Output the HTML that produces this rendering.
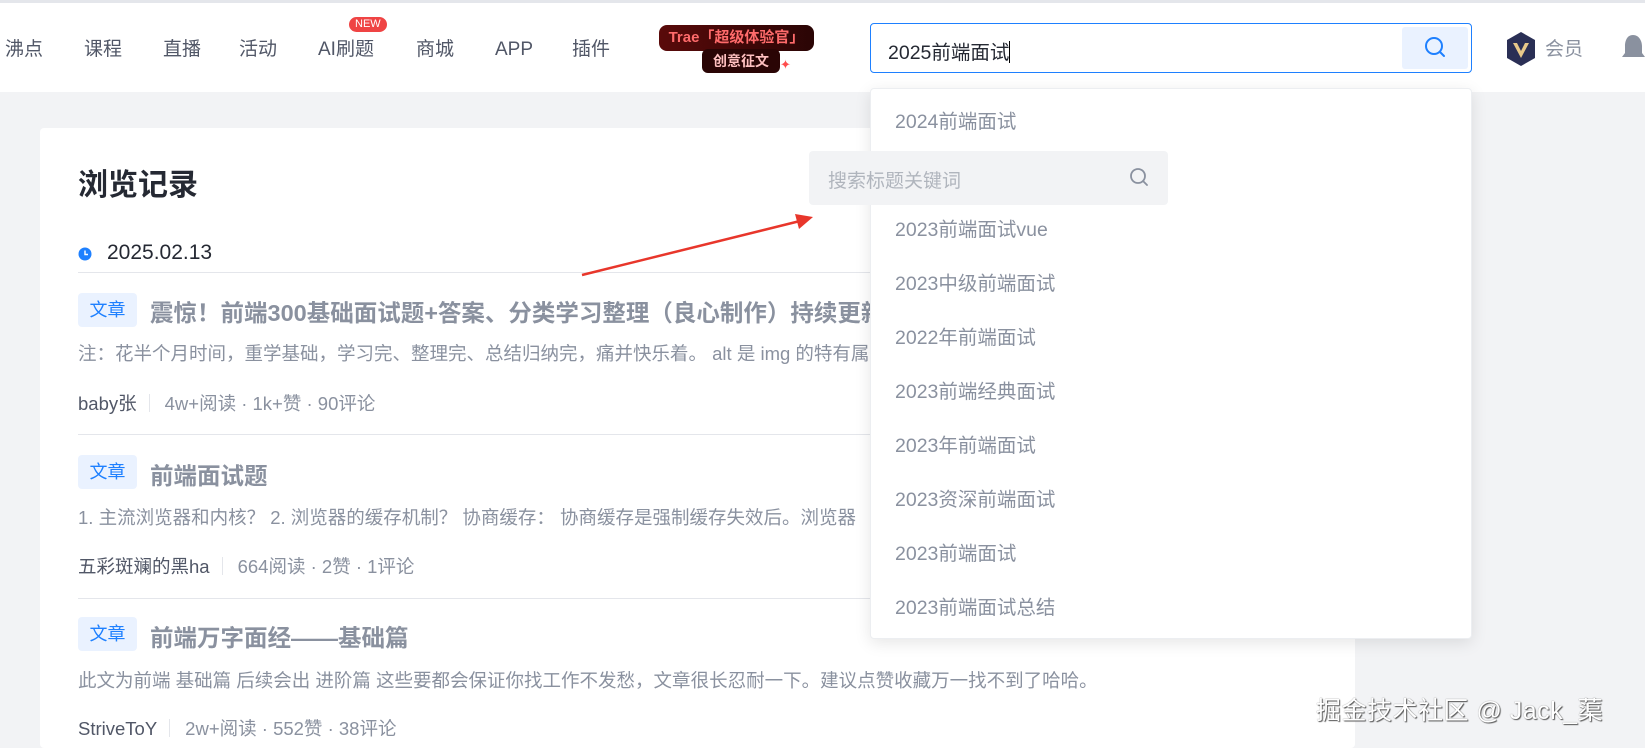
<!DOCTYPE html>
<html><head><meta charset="utf-8"><style>
*{margin:0;padding:0;box-sizing:border-box}
body{width:1645px;height:742px;overflow:hidden;background:#f2f3f5;font-family:"Liberation Sans","Noto Sans CJK SC",sans-serif;position:relative;color:#252933}
.abs{position:absolute;white-space:nowrap}
#hdr{position:absolute;left:0;top:0;width:1645px;height:92px;background:#fff;border-top:3px solid #e4e6eb}
.nav{position:absolute;top:34px;font-size:19px;color:#515767;line-height:26px}
.card{position:absolute;left:40px;top:128px;width:1315px;height:620px;background:#fff;border-radius:4px}
.tag{position:absolute;left:78px;width:59px;height:34px;background:#eaf2ff;color:#1e80ff;font-size:18px;line-height:34px;text-align:center;border-radius:4px}
.t{position:absolute;left:150px;font-size:23.5px;font-weight:bold;color:#8a919f;white-space:nowrap}
.ex{position:absolute;left:78px;font-size:18.5px;color:#8a919f;white-space:nowrap}
.meta{position:absolute;left:78px;font-size:18.5px;color:#8a919f;white-space:nowrap}
.meta b{font-weight:normal;color:#515767}
.meta i{font-style:normal;display:inline-block;width:1px;height:18px;background:#e4e6eb;margin:0 15px -2px 12px}
.hr{position:absolute;left:78px;width:1240px;height:1px;background:#e4e6eb}
.dd{position:absolute;left:870px;top:88px;width:602px;height:551px;background:#fff;border-radius:4px;box-shadow:0 4px 16px rgba(0,0,0,.1);border:1px solid #eceef1}
.di{position:absolute;left:24px;font-size:19.5px;color:#8a919f;line-height:24px}
</style></head><body>
<div id="hdr">
<div class="nav" style="left:5px">沸点</div>
<div class="nav" style="left:84px">课程</div>
<div class="nav" style="left:163px">直播</div>
<div class="nav" style="left:239px">活动</div>
<div class="nav" style="left:318px">AI刷题</div>
<div class="abs" style="left:349px;top:14px;background:#ef4444;color:#fff;font-size:11px;line-height:15px;padding:0 6px;border-radius:8px">NEW</div>
<div class="nav" style="left:416px">商城</div>
<div class="nav" style="left:495px">APP</div>
<div class="nav" style="left:572px">插件</div>
<div class="abs" style="left:659px;top:22px;width:155px;height:26px;background:linear-gradient(90deg,#5a0a0a,#2a0505);border-radius:8px;color:#ff6b6b;font-size:15px;font-weight:bold;line-height:26px;text-align:center">Trae「超级体验官」</div>
<div class="abs" style="left:702px;top:46px;width:78px;height:24px;background:#2a0505;border-radius:6px;color:#ffc0c0;font-size:14px;font-weight:bold;line-height:24px;text-align:center">创意征文</div>
<div class="abs" style="left:780px;top:54px;color:#ff4d4d;font-size:13px">✦</div>
<div class="abs" style="left:870px;top:20px;width:602px;height:50px;border:1px solid #1e80ff;border-radius:4px;background:#fff">
<div class="abs" style="left:17px;top:12px;font-size:19.5px;color:#252933">2025前端面试<span style="display:inline-block;width:1px;height:22px;background:#000;vertical-align:-4px"></span></div>
<div class="abs" style="right:3px;top:3px;width:66px;height:42px;background:#eaf2ff;border-radius:3px">
<svg width="66" height="42"><circle cx="32" cy="19" r="8" fill="none" stroke="#1e80ff" stroke-width="2"/><line x1="38" y1="25" x2="42" y2="29" stroke="#1e80ff" stroke-width="2" stroke-linecap="round"/></svg></div></div>
<svg class="abs" style="left:1505px;top:28px" width="32" height="36"><path d="M16 1 L30 9 L30 27 L16 35 L2 27 L2 9Z" fill="#2a2f55"/><path d="M8 12 L16 27 L24 12 L20 12 L16 20 L12 12Z" fill="#e8c98a"/></svg>
<div class="nav" style="left:1545px;color:#8a919f">会员</div>
<svg class="abs" style="left:1622px;top:30px" width="23" height="30"><path d="M11 2 C5 2 3 8 3 13 L3 20 L0 24 L23 24 L20 20 L20 13 C20 8 17 2 11 2Z" fill="#8a919f"/></svg>
</div>
<div class="card"></div>
<div class="abs" style="left:78px;top:160px;font-size:30px;font-weight:bold;color:#252933">浏览记录</div>
<svg class="abs" style="left:78px;top:247px" width="14" height="14"><circle cx="7" cy="7" r="6.5" fill="#1e80ff"/><path d="M7 3.5 V7.5 H10" stroke="#fff" stroke-width="1.4" fill="none"/></svg>
<div class="abs" style="left:107px;top:241px;font-size:21px;color:#252933">2025.02.13</div>
<div class="hr" style="top:272px"></div>
<div class="tag" style="top:293px">文章</div>
<div class="t" style="top:294px">震惊！前端300基础面试题+答案、分类学习整理（良心制作）持续更新</div>
<div class="ex" style="top:340px">注：花半个月时间，重学基础，学习完、整理完、总结归纳完，痛并快乐着。 alt 是 img 的特有属性</div>
<div class="meta" style="top:390px"><b>baby张</b><i></i>4w+阅读 · 1k+赞 · 90评论</div>
<div class="hr" style="top:434px"></div>
<div class="tag" style="top:455px">文章</div>
<div class="t" style="top:457px">前端面试题</div>
<div class="ex" style="top:504px">1. 主流浏览器和内核？ 2. 浏览器的缓存机制？ 协商缓存： 协商缓存是强制缓存失效后。浏览器</div>
<div class="meta" style="top:553px"><b>五彩斑斓的黑ha</b><i></i>664阅读 · 2赞 · 1评论</div>
<div class="hr" style="top:598px"></div>
<div class="tag" style="top:617px">文章</div>
<div class="t" style="top:619px">前端万字面经——基础篇</div>
<div class="ex" style="top:667px">此文为前端 基础篇 后续会出 进阶篇 这些要都会保证你找工作不发愁，文章很长忍耐一下。建议点赞收藏万一找不到了哈哈。</div>
<div class="meta" style="top:715px"><b>StriveToY</b><i></i>2w+阅读 · 552赞 · 38评论</div>
<svg class="abs" style="left:575px;top:210px" width="245" height="72"><line x1="7" y1="65" x2="225" y2="11" stroke="#e8362b" stroke-width="2.5"/><path d="M238 7 L220 4 L224 19Z" fill="#e8362b"/></svg>
<div class="dd">
<div class="di" style="top:21px">2024前端面试</div>
<div class="di" style="top:129px">2023前端面试vue</div>
<div class="di" style="top:183px">2023中级前端面试</div>
<div class="di" style="top:237px">2022年前端面试</div>
<div class="di" style="top:291px">2023前端经典面试</div>
<div class="di" style="top:345px">2023年前端面试</div>
<div class="di" style="top:399px">2023资深前端面试</div>
<div class="di" style="top:453px">2023前端面试</div>
<div class="di" style="top:507px">2023前端面试总结</div>
</div>
<div class="abs" style="left:809px;top:151px;width:359px;height:54px;background:#f2f3f5;border-radius:4px">
<div class="abs" style="left:19px;top:15px;font-size:19px;color:#b0b5bd">搜索标题关键词</div>
<svg class="abs" style="left:320px;top:16px" width="22" height="22"><circle cx="9" cy="9" r="7" fill="none" stroke="#8a919f" stroke-width="1.8"/><line x1="14" y1="14" x2="18" y2="18" stroke="#8a919f" stroke-width="1.8" stroke-linecap="round"/></svg>
</div>
<div class="abs" style="left:1316px;top:691px;font-size:25px;letter-spacing:0.5px;color:#fff;text-shadow:1px 1px 1px #555,0 0 1px #777">掘金技术社区 @ Jack_蕖</div>
</body></html>
